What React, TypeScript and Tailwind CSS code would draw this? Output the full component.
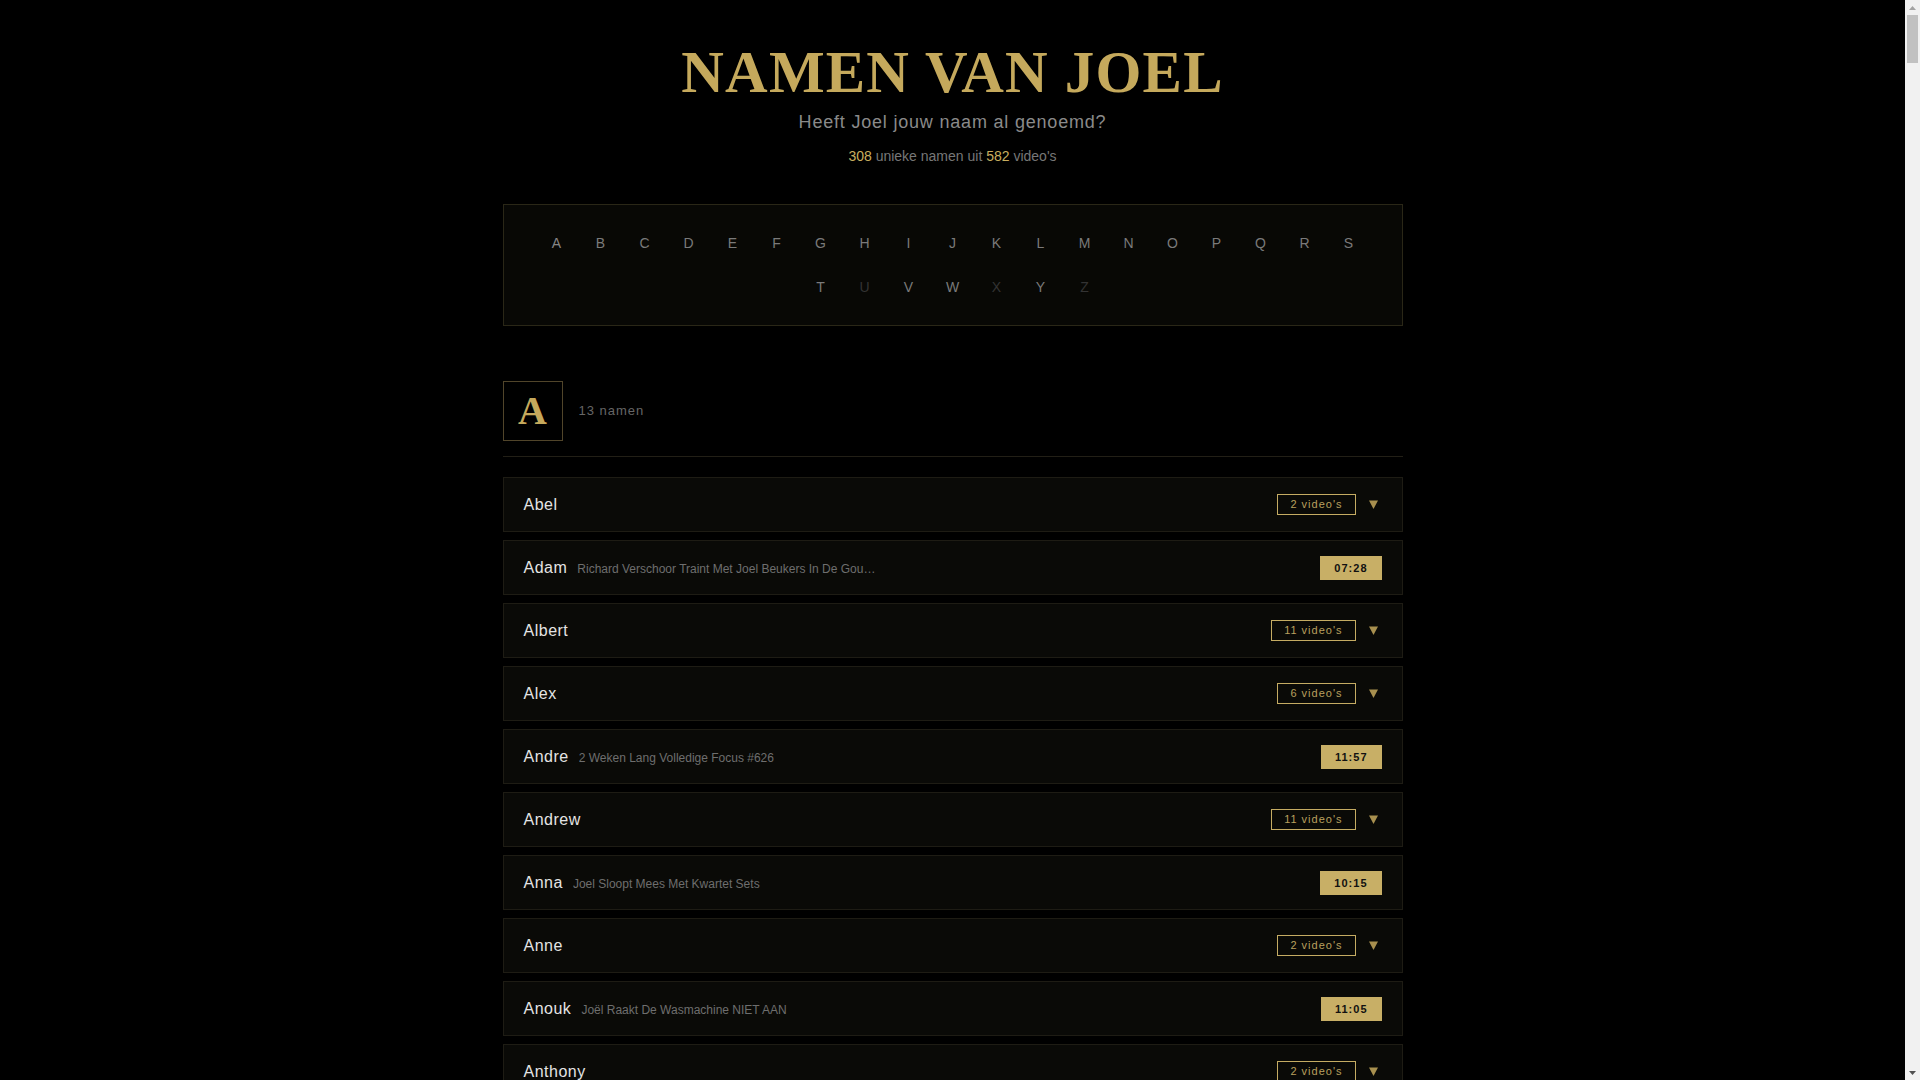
import { useState } from 'react';

type Entry = { name: string; count?: number; title?: string; duration?: string };

const LETTERS = 'ABCDEFGHIJKLMNOPQRSTUVWXYZ'.split('');
const EMPTY = ['U', 'X', 'Z'];

const A_ENTRIES: Entry[] = [
  { name: 'Abel', count: 2 },
  { name: 'Adam', title: 'Richard Verschoor Traint Met Joel Beukers In De Gouden Kooi', duration: '07:28' },
  { name: 'Albert', count: 11 },
  { name: 'Alex', count: 6 },
  { name: 'Andre', title: '2 Weken Lang Volledige Focus #626', duration: '11:57' },
  { name: 'Andrew', count: 11 },
  { name: 'Anna', title: 'Joel Sloopt Mees Met Kwartet Sets', duration: '10:15' },
  { name: 'Anne', count: 2 },
  { name: 'Anouk', title: 'Joël Raakt De Wasmachine NIET AAN', duration: '11:05' },
  { name: 'Anthony', count: 2 },
  { name: 'Arjen', count: 3 },
  { name: 'Arthur', title: 'Joel Gaat Op Zoek Naar De Beste Frikandel', duration: '09:42' },
  { name: 'Axel', count: 4 },
];

const NAMES: Record<string, string[]> = {
  B: ['Bart', 'Bas', 'Bastiaan', 'Ben', 'Bernard', 'Bert', 'Bianca', 'Bob', 'Boris', 'Bram', 'Brian', 'Britt', 'Bruno'],
  C: ['Carla', 'Carlos', 'Casper', 'Chantal', 'Charlotte', 'Chris', 'Christiaan', 'Cor', 'Corné', 'Cynthia'],
  D: ['Daan', 'Daniel', 'Danny', 'Dave', 'David', 'Dennis', 'Derek', 'Dick', 'Diego', 'Dirk', 'Dylan', 'Demi', 'Dion', 'Dorien'],
  E: ['Eddy', 'Edwin', 'Eline', 'Emma', 'Erik', 'Ernst', 'Esther', 'Evert', 'Eva'],
  F: ['Fabian', 'Femke', 'Floor', 'Frank', 'Frans', 'Fred', 'Freek', 'Frits', 'Fleur'],
  G: ['Gerard', 'Gert', 'Gijs', 'Gerrit', 'Gino', 'Guus', 'Gwen', 'Gerben'],
  H: ['Hans', 'Harm', 'Harry', 'Hein', 'Henk', 'Henry', 'Herman', 'Hugo', 'Hanna', 'Hidde'],
  I: ['Ian', 'Ilse', 'Inge', 'Ingrid', 'Iris', 'Isa', 'Ivo'],
  J: ['Jaap', 'Jack', 'Jan', 'Jasper', 'Jeroen', 'Jesse', 'Jim', 'Job', 'Joep', 'John', 'Joost', 'Jordy', 'Jurre', 'Julia', 'Jelle', 'Joris'],
  K: ['Karel', 'Karin', 'Kees', 'Kevin', 'Kim', 'Klaas', 'Koen', 'Kris', 'Kyra'],
  L: ['Lars', 'Laura', 'Leo', 'Levi', 'Lisa', 'Lotte', 'Luc', 'Lucas', 'Luuk', 'Lieke', 'Lennard'],
  M: ['Maarten', 'Marco', 'Mark', 'Martijn', 'Max', 'Mees', 'Melvin', 'Michael', 'Mike', 'Milan', 'Mirjam', 'Mitchell', 'Marieke', 'Mats'],
  N: ['Niels', 'Nick', 'Nina', 'Noah', 'Noor', 'Nora', 'Nathan', 'Nienke'],
  O: ['Olaf', 'Olivier', 'Oscar', 'Otto', 'Owen'],
  P: ['Paul', 'Peter', 'Piet', 'Pim', 'Pieter', 'Patrick', 'Pascal', 'Pepijn', 'Paula', 'Priscilla'],
  Q: ['Quinten', 'Quincy'],
  R: ['Remco', 'Richard', 'Rick', 'Rob', 'Robin', 'Roel', 'Ronald', 'Ruben', 'Rutger', 'Ruud', 'Roy', 'Renate'],
  S: ['Sander', 'Sanne', 'Sarah', 'Sem', 'Simon', 'Sjaak', 'Sjoerd', 'Stefan', 'Steven', 'Stijn', 'Sven', 'Sophie', 'Sietse'],
  T: ['Teun', 'Thijs', 'Thomas', 'Tim', 'Tom', 'Tijmen', 'Tess', 'Tobias', 'Tygo'],
  V: ['Valentijn', 'Vera', 'Victor', 'Vincent', 'Vos'],
  W: ['Wessel', 'Wim', 'Willem', 'Wouter', 'Wendy', 'Wilco'],
  Y: ['Yara', 'Yvonne', 'Youri'],
};

const TITLES = [
  'Joel Bouwt Een Boomhut In Een Dag',
  'De Grote Snackbar Test Van Nederland',
  'Joel Probeert 24 Uur Stil Te Zijn',
  'Wie Wint De Kartrace Op Zondag',
  'Het Duurste Broodje Van Amsterdam',
  'Joel Kookt Voor Het Eerst Stamppot',
  'Overleven Op Een Onbewoond Eiland',
  'Joel Test Rare Gadgets Uit China',
  'De Langste Fietstocht Ooit #412',
  'Joel Zoekt De Perfecte Kapper',
];

function buildEntries(letter: string): Entry[] {
  if (letter === 'A') return A_ENTRIES;
  return (NAMES[letter] ?? []).map((name, i) => {
    const seed = name.length * 7 + i * 13 + letter.charCodeAt(0);
    if (seed % 3 === 0) {
      const m = 6 + (seed % 9);
      const s = (seed * 17) % 60;
      return {
        name,
        title: TITLES[seed % TITLES.length],
        duration: `${String(m).padStart(2, '0')}:${String(s).padStart(2, '0')}`,
      };
    }
    return { name, count: 2 + (seed % 10) };
  });
}

function Arrow() {
  return (
    <span className="w-4 flex justify-center">
      <svg width="9" height="9" viewBox="0 0 9 9">
        <polygon points="0,0.5 9,0.5 4.5,9" fill="#a8904f" />
      </svg>
    </span>
  );
}

function NameRow({ entry }: { entry: Entry }) {
  return (
    <div className="h-[55px] flex items-center justify-between px-5 bg-[#0a0a07] border border-[#1e1c14]">
      <div className="flex items-baseline gap-2.5 min-w-0">
        <span className="text-[16px] tracking-[0.5px] text-[#e4e4e4]">{entry.name}</span>
        {entry.title && (
          <span className="text-[12px] text-[#6e6e6e] max-w-[300px] truncate">{entry.title}</span>
        )}
      </div>
      {entry.duration ? (
        <span className="bg-[#c8af66] text-[#111] text-[11px] font-bold tracking-[1px] leading-[14px] px-[14px] py-[5px]">
          {entry.duration}
        </span>
      ) : (
        <div className="flex items-center gap-2.5">
          <span className="border border-[#c5ac63] text-[#b9a05e] text-[11px] tracking-[1px] leading-[13px] px-3 py-[3px]">
            {entry.count} video's
          </span>
          <Arrow />
        </div>
      )}
    </div>
  );
}

function LetterSection({ letter }: { letter: string }) {
  const entries = buildEntries(letter);
  return (
    <section className="mb-14">
      <div className="flex items-center gap-4 pb-[15px] border-b border-[#221f16] mb-5">
        <div className="w-[60px] h-[60px] flex items-center justify-center border border-[#51452a] font-['Liberation_Serif',serif] font-bold text-[40px] text-[#c5a95c]">
          {letter}
        </div>
        <span className="text-[13px] tracking-[1px] text-[#666]">{entries.length} namen</span>
      </div>
      <div className="flex flex-col gap-2">
        {entries.map((e, i) => (
          <NameRow key={e.name + i} entry={e} />
        ))}
      </div>
    </section>
  );
}

// Classic browser scrollbar as seen in the screenshot
function ScrollBar() {
  return (
    <aside className="w-[15px] shrink-0 bg-[#f1f1f1] flex flex-col items-center">
      <div className="h-[15px] flex items-center justify-center">
        <svg width="7" height="4" viewBox="0 0 7 4">
          <polygon points="3.5,0 7,4 0,4" fill="#a3a3a3" />
        </svg>
      </div>
      <div className="w-[11px] h-[48px] bg-[#c1c1c1]" />
      <div className="flex-1" />
      <div className="h-[15px] flex items-center justify-center">
        <svg width="7" height="4" viewBox="0 0 7 4">
          <polygon points="0,0 7,0 3.5,4" fill="#505050" />
        </svg>
      </div>
    </aside>
  );
}

export default function App() {
  const [active, setActive] = useState('A');

  return (
    <div className="h-screen flex bg-black font-['Liberation_Sans',Arial,sans-serif]">
      <main className="flex-1 overflow-y-auto">
        <div className="max-w-[900px] mx-auto pt-[43px] pb-16">
          {/* Header */}
          <header className="text-center">
            <h1 className="font-['Liberation_Serif',serif] font-bold text-[59px] leading-[58px] tracking-[1.2px] text-[#c5a95c]">
              NAMEN VAN JOEL
            </h1>
            <p className="mt-[9px] text-[18px] leading-[24px] tracking-[0.8px] text-[#8a8a8a]">
              Heeft Joel jouw naam al genoemd?
            </p>
            <p className="mt-[12px] text-[14px] leading-[20px] text-[#777]">
              <span className="text-[#c9ae5f]">308</span> unieke namen uit{' '}
              <span className="text-[#c9ae5f]">582</span> video's
            </p>
          </header>

          {/* Alphabet */}
          <nav className="mt-[38px] border border-[#2a2717] bg-[#080805] px-8 py-[18px] flex flex-wrap justify-center gap-1">
            {LETTERS.map(l => {
              const disabled = EMPTY.includes(l);
              return (
                <button
                  key={l}
                  disabled={disabled}
                  onClick={() => setActive(l)}
                  className={`w-10 h-10 flex items-center justify-center text-[14px] ${
                    disabled ? 'text-[#333]' : active === l ? 'text-[#858585]' : 'text-[#7a7a7a]'
                  }`}
                >
                  {l}
                </button>
              );
            })}
          </nav>

          {/* Sections */}
          <div className="mt-[55px]">
            {LETTERS.filter(l => !EMPTY.includes(l)).map(l => (
              <LetterSection key={l} letter={l} />
            ))}
          </div>
        </div>
      </main>
      <ScrollBar />
    </div>
  );
}
